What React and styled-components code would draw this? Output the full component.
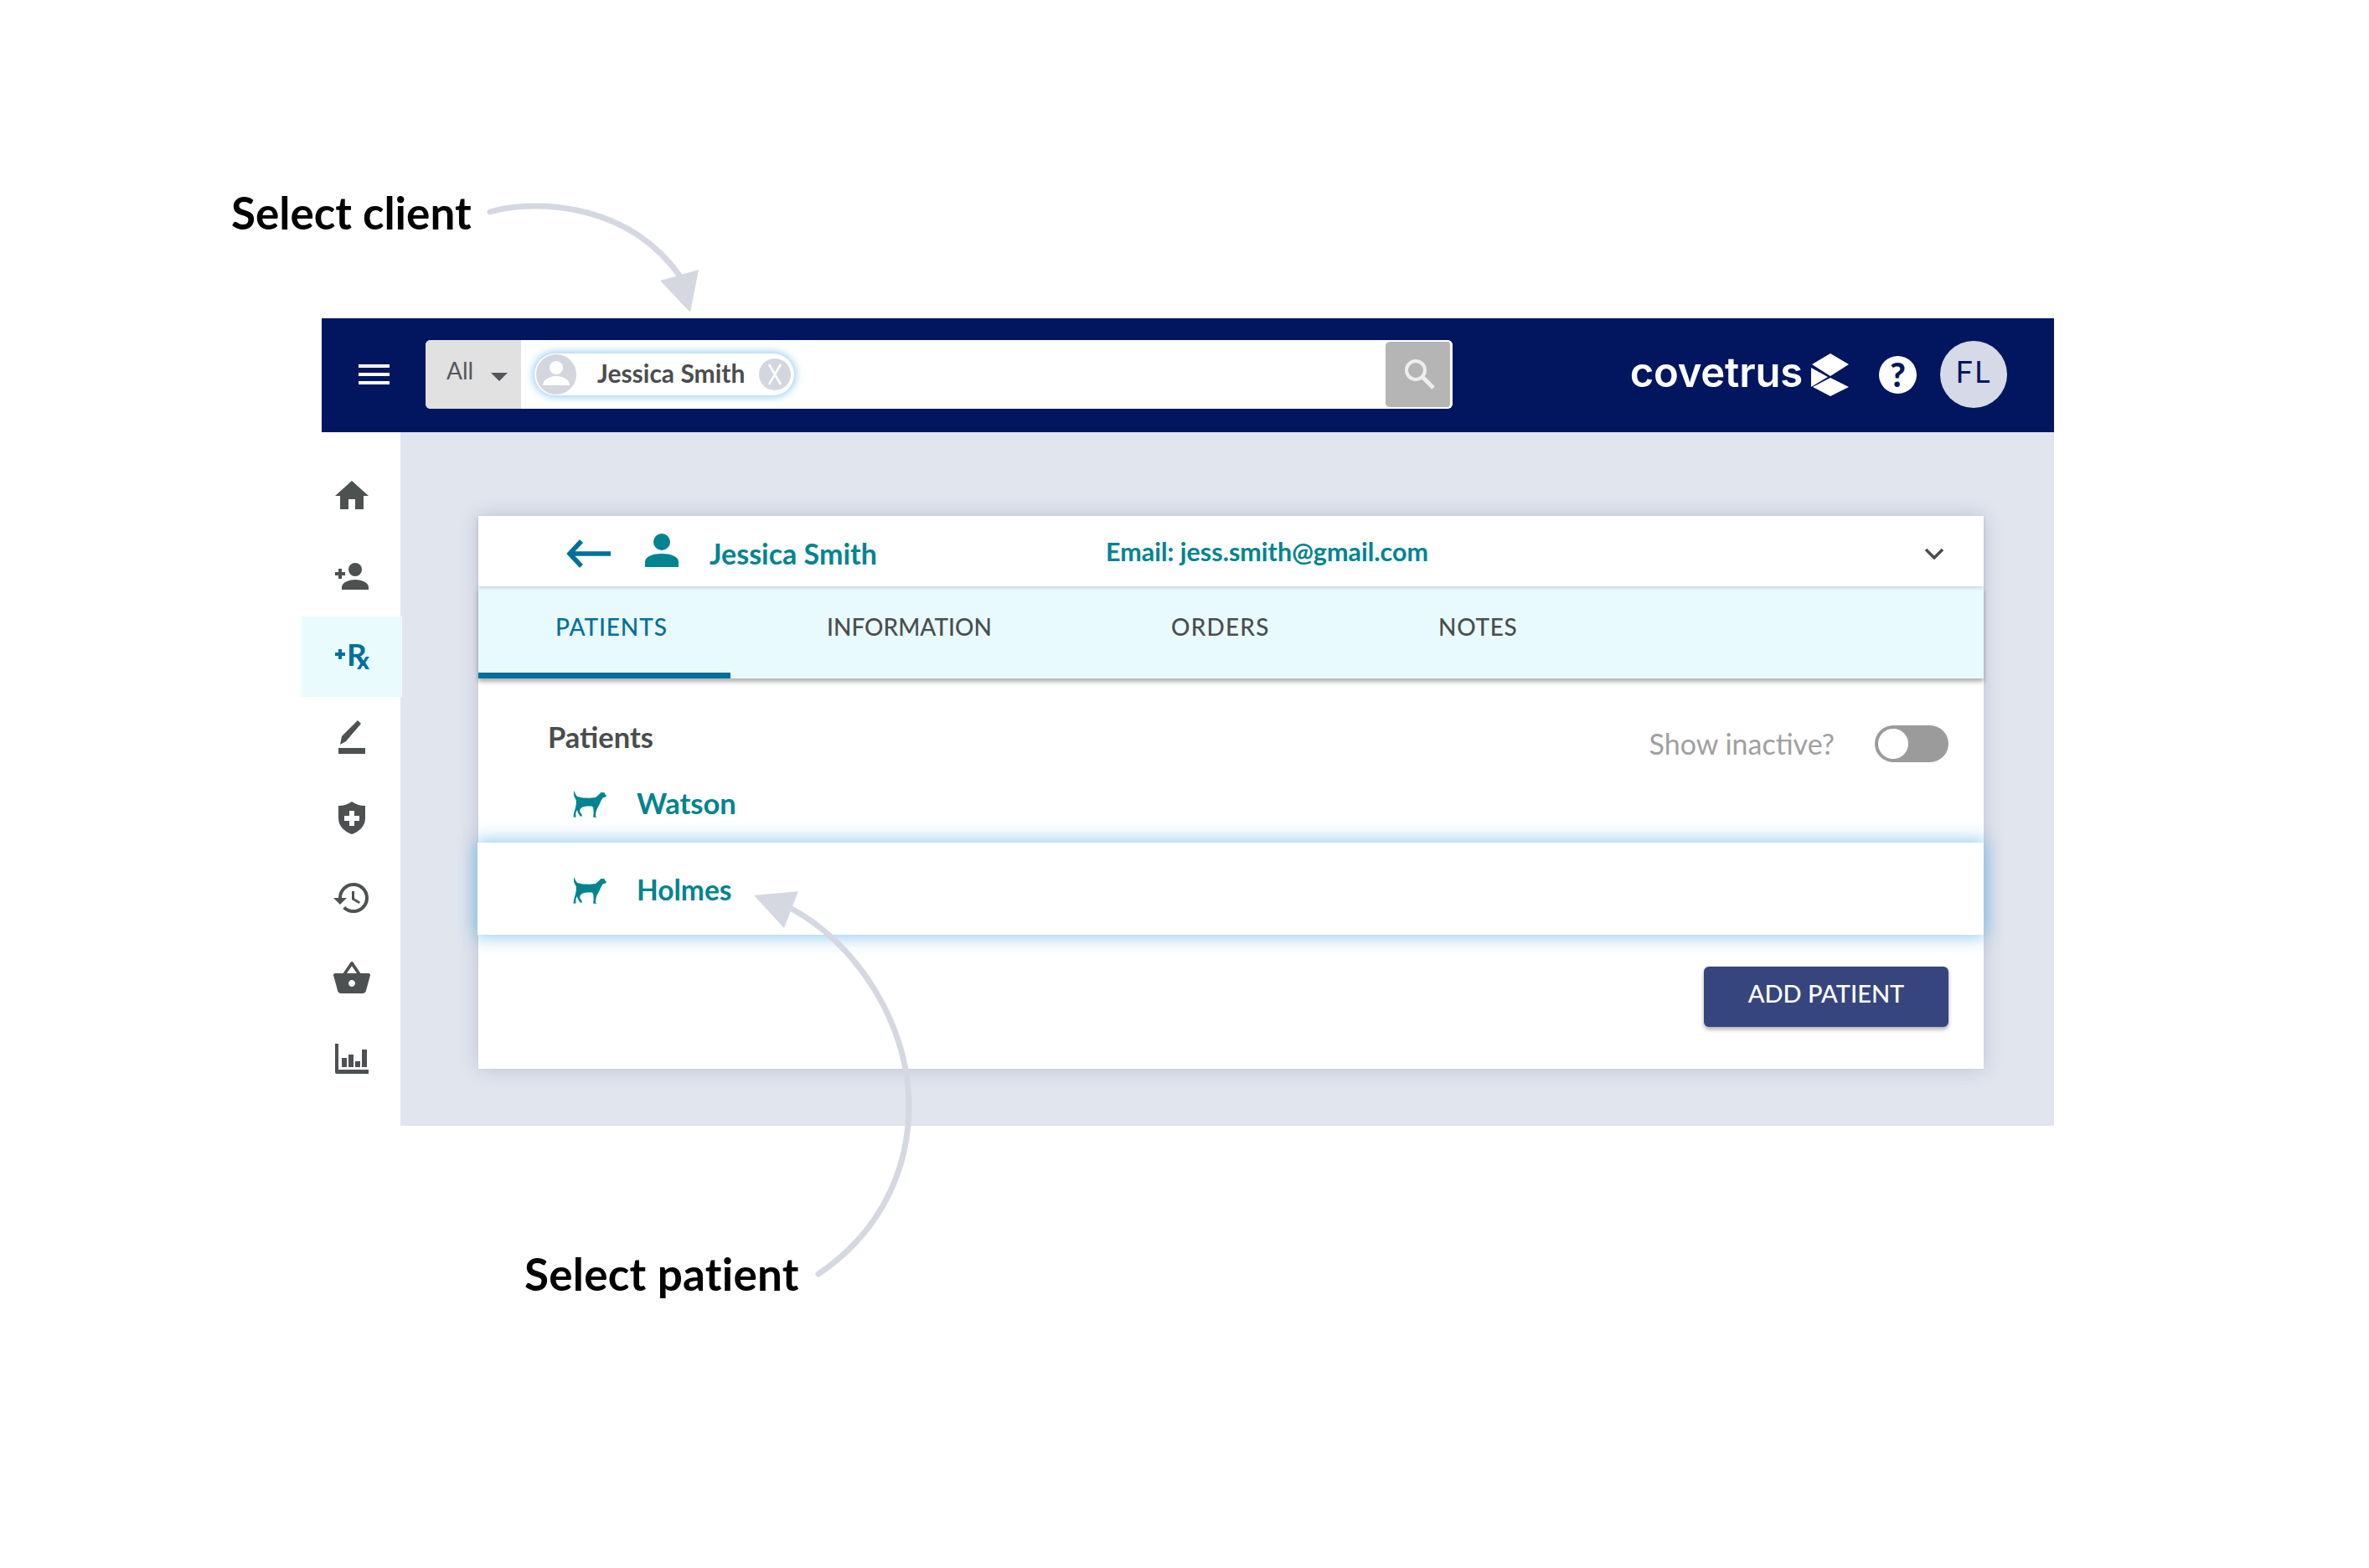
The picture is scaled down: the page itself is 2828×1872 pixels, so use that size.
import React from "react";
import styled, { createGlobalStyle } from "styled-components";

const Global = createGlobalStyle`
  html, body { margin: 0; padding: 0; background: #fff; }
  * { box-sizing: border-box; }
`;

const Page = styled.div`
  position: relative;
  width: 2828px;
  height: 1872px;
  overflow: hidden;
  background: #fff;
  font-family: "Lato", "Noto Sans", sans-serif;
`;
const Annotation = styled.div`
  font-size: 53px;
  font-weight: 700;
  line-height: 64px;
  color: #000;
  white-space: nowrap;
`;
const ClientNote = styled(Annotation)`
  height: 380px;
  padding: 222px 0 0 276px;
`;
const PatientNote = styled(Annotation)`
  padding: 145px 0 0 626px;
  letter-spacing: 0.25px;
`;
const ArrowLayer = styled.svg`
  position: absolute;
  left: 0;
  top: 0;
  z-index: 5;
  pointer-events: none;
`;
const AppFrame = styled.div`
  margin-left: 384px;
  width: 2068px;
`;
const Header = styled.header`
  display: flex;
  align-items: center;
  height: 136px;
  padding: 0 56px 2px 44px;
  background: #01165f;
`;
const Burger = styled.div`
  display: flex;
  flex-direction: column;
  justify-content: space-between;
  width: 37px;
  height: 24px;
  margin-right: 43px;
  span { display: block; height: 4px; background: #fff; }
`;
const SearchBar = styled.div`
  display: flex;
  width: 1226px;
  height: 82px;
  border-radius: 6px;
  overflow: hidden;
  background: #fff;
`;
const Scope = styled.div`
  display: flex;
  flex: none;
  width: 114px;
  padding: 19px 0 0 25px;
  background: #e1e1e1;
  color: #54575a;
  font-size: 28px;
  line-height: 34px;
`;
const Caret = styled.i`
  width: 0;
  height: 0;
  margin: 20px 0 0 21px;
  border-left: 10px solid transparent;
  border-right: 10px solid transparent;
  border-top: 10px solid #54575a;
`;
const SearchField = styled.div`
  flex: 1;
  display: flex;
  align-items: center;
  padding-left: 16px;
`;
const Chip = styled.div`
  display: flex;
  align-items: center;
  width: 310px;
  height: 50px;
  padding: 0 4px 0 2px;
  border-radius: 25px;
  background: #fff;
  box-shadow: 0 0 10px 2px rgba(120, 190, 232, 0.75);
  color: #4a4d4e;
  font-size: 30px;
  font-weight: 700;
`;
const ChipName = styled.span`
  flex: 1;
  padding: 0 0 5px 25px;
  white-space: nowrap;
`;
const SearchButton = styled.div`
  display: flex;
  align-items: center;
  justify-content: center;
  flex: none;
  width: 80px;
  padding: 0 0 0 4px;
  border: solid #fff;
  border-width: 2px 3px 2px 0;
  border-radius: 6px;
  background: #b5b5b5;
`;
const Brand = styled.div`
  display: flex;
  align-items: center;
  margin-left: auto;
`;
const BrandName = styled.span`
  color: #fff;
  font-family: "Inter", sans-serif;
  font-size: 49px;
  font-weight: 600;
  line-height: 46px;
  letter-spacing: -0.2px;
  margin: 0 10px 4px 0;
`;
const Help = styled.div`
  display: flex;
  align-items: center;
  justify-content: center;
  width: 45px;
  height: 45px;
  margin: 0 28px 0 36px;
  border-radius: 50%;
  background: #fff;
  color: #01165f;
  font-size: 40px;
  font-weight: 900;
  line-height: 1;
`;
const Avatar = styled.div`
  display: flex;
  align-items: center;
  justify-content: center;
  width: 80px;
  height: 80px;
  padding-bottom: 8px;
  border-radius: 50%;
  background: #d6d9e8;
  color: #01165f;
  font-size: 36px;
  letter-spacing: 2px;
`;
const Body = styled.div`
  display: flex;
`;
const Sidebar = styled.nav`
  flex: none;
  width: 94px;
  padding-top: 28px;
  background: #fff;
`;
const NavItem = styled.div`
  position: relative;
  z-index: 1;
  display: flex;
  align-items: center;
  justify-content: center;
  width: 120px;
  height: 96px;
  margin-left: -24px;
  background: ${(p) => (p.$active ? "#e9fbfc" : "transparent")};
  color: #4e5152;
`;
const RxMark = styled.span`
  position: relative;
  display: block;
  width: 40px;
  height: 30px;
  color: #00709b;
  line-height: 1;
  b {
    position: absolute;
    left: 0;
    top: 6px;
    width: 12px;
    height: 12px;
    background:
      linear-gradient(#00709b, #00709b) center / 12px 4px no-repeat,
      linear-gradient(#00709b, #00709b) center / 4px 12px no-repeat;
  }
  em { position: absolute; left: 14px; top: -7px; font-style: normal; font-size: 37px; font-weight: 700; }
  u { position: absolute; left: 26px; top: 5px; text-decoration: none; font-size: 28px; font-weight: 900; line-height: 1; }
`;
const Main = styled.main`
  flex: 1;
  padding: 100px 84px 68px 93px;
  background: #e1e5ee;
`;
const Card = styled.section`
  position: relative;
  display: flex;
  flex-direction: column;
  height: 660px;
  background: #fff;
  box-shadow: 0 0 22px rgba(60, 70, 110, 0.22);
`;
const CardHeader = styled.div`
  position: relative;
  z-index: 2;
  display: flex;
  align-items: center;
  flex: none;
  height: 84px;
  padding: 0 47px 0 105px;
  background: #fff;
  box-shadow: 0 2px 4px rgba(0, 0, 0, 0.14);
`;
const BackIcon = styled.svg`
  display: block;
  flex: none;
  margin-top: 5px;
  color: #00709b;
`;
const PersonIcon = styled.svg`
  display: block;
  flex: none;
  margin: 0 0 2px 41px;
  fill: #00848f;
`;
const Chevron = styled.svg`
  display: block;
  flex: none;
  margin-top: 5px;
  color: #4a4d4e;
`;
const ClientName = styled.span`
  margin-left: 37px;
  width: 473px;
  color: #00848f;
  font-size: 34px;
  font-weight: 700;
  padding-top: 4px;
`;
const Email = styled.span`
  flex: 1;
  color: #00848f;
  font-size: 30.500px;
  font-weight: 700;
`;
const Tabs = styled.div`
  position: relative;
  z-index: 1;
  display: flex;
  flex: none;
  height: 110px;
  background: #e9faff;
  box-shadow: 0 4px 5px rgba(0, 0, 0, 0.3);
`;
const Tab = styled.div`
  display: flex;
  align-items: center;
  width: ${(p) => p.$w}px;
  padding-left: ${(p) => p.$pl}px;
  padding-bottom: 8px;
  border-bottom: 7px solid ${(p) => (p.$active ? "#00709b" : "transparent")};
  color: ${(p) => (p.$active ? "#00709b" : "#4a4d4e")};
  font-size: 28px;
  font-weight: 500;
  letter-spacing: ${(p) => p.$ls || 0}px;
  white-space: nowrap;
`;
const PanelHead = styled.div`
  display: flex;
  justify-content: space-between;
  flex: none;
  height: 104px;
  padding: 50px 42px 0 83px;
`;
const PanelTitle = styled.h2`
  margin: 0;
  color: #4a4d4e;
  font-size: 34.500px;
  font-weight: 700;
  line-height: 40px;
`;
const InactiveToggle = styled.div`
  display: flex;
  align-items: flex-start;
  gap: 48px;
  color: #a0a0a0;
  font-size: 34px;
  font-weight: 400;
  line-height: 40px;
  padding-top: 8px;
`;
const ToggleTrack = styled.div`
  position: relative;
  width: 88px;
  height: 44px;
  margin-top: -2px;
  border-radius: 22px;
  background: #9b9b9b;
  &::after {
    content: "";
    position: absolute;
    left: 4px;
    top: 4px;
    width: 36px;
    height: 36px;
    border-radius: 50%;
    background: #fff;
  }
`;
const PatientRow = styled.div`
  position: relative;
  z-index: ${(p) => (p.$selected ? 3 : 0)};
  display: flex;
  align-items: center;
  flex: none;
  height: ${(p) => (p.$selected ? 110 : 92)}px;
  margin-left: ${(p) => (p.$selected ? -1 : 0)}px;
  padding: ${(p) => (p.$selected ? "4px 0 0 114px" : "0 0 0 113px")};
  background: #fff;
  box-shadow: ${(p) => (p.$selected ? "0 0 20px 2px rgba(100, 180, 230, 0.75)" : "none")};
  color: #00848f;
  font-size: ${(p) => (p.$selected ? 33.5 : 34.5)}px;
  font-weight: 700;
`;
const PatientName = styled.span`
  margin: 0 0 3px 36px;
`;
const CardFoot = styled.div`
  display: flex;
  justify-content: flex-end;
  padding: 38px 42px 0 0;
`;
const AddButton = styled.button`
  width: 292px;
  height: 72px;
  padding: 0 0 10px;
  border: none;
  border-radius: 6px;
  background: #37457f;
  box-shadow: 0 3px 5px rgba(0, 0, 0, 0.32);
  color: #fff;
  font-family: inherit;
  font-size: 29px;
  font-weight: 500;
`;

const Svg = styled.svg`
  display: block;
  flex: none;
  fill: currentColor;
`;
const DogIcon = styled(Svg)`
  color: #00848f;
`;
const LogoMark = styled(Svg)`
  color: #fff;
`;

const Dog = () => (
  <DogIcon width="40" height="32" viewBox="0 0 40 32">
    <path d="M1.700 0L2.600 3.500 5 7 12 8.500 20 8.800 27 8 31 4.500 33.500 2 37.500 2.300 38.500 4.500 40 5.800 39 7.500 35.500 8.500 33.500 12 31 17.500 28.500 22 27.300 26 27 30.500 28.500 31.700 24.200 31.700 24.600 26 24.300 21 23 18.500 16 18.500 11.500 19.500 8.500 22 8.200 25 10.500 28.500 11 30.500 8.500 30.500 5.800 26 5 23 3.500 26 3.200 29.500 3.800 31.500 .5 31.500 1 27 2.800 21 3.800 16 3.800 11.500 1.500 7 .8 3Z" />
  </DogIcon>
);

const Nav = [
  <Svg key="home" width="48" height="48" viewBox="0 0 24 24"><path d="M10 20v-6h4v6h5v-8h3L12 3 2 12h3v8z" /></Svg>,
  <Svg key="add" width="40" height="32" viewBox="0 0 40 32"><circle cx="24" cy="8" r="8" /><path d="M8 32v-3c0-6 10-9 16-9s16 3 16 9v3z" /><path d="M0 11h4V7h4v4h4v4H8v4H4v-4H0z" /></Svg>,
  <RxMark key="rx"><b /><em>R</em><u>x</u></RxMark>,
  <Svg key="edit" width="32" height="40" viewBox="0 0 32 40"><rect y="33" width="32" height="7" /><path d="M2 29l2-10L23 0l4 4L9 25z" /></Svg>,
  <Svg key="shield" width="32" height="39" viewBox="0 0 32 39"><path fillRule="evenodd" d="M16 0c4 3 10 5 16 5v15c0 10-8 16-16 19C8 36 0 30 0 20V5c6 0 12-2 16-5zM13 11v6H7v6h6v6h6v-6h6v-6h-6v-6z" /></Svg>,
  <Svg key="history" width="48" height="48" viewBox="0 0 24 24"><path d="M13 3a9 9 0 0 0-9 9H1l3.890 3.890.07.14L9 12H6c0-3.870 3.130-7 7-7s7 3.130 7 7-3.130 7-7 7c-1.930 0-3.680-.79-4.940-2.060l-1.420 1.420A8.954 8.954 0 0 0 13 21a9 9 0 0 0 0-18zm-1 5v5l4.280 2.540.72-1.210-3.500-2.080V8H12z" /></Svg>,
  <Svg key="basket" width="48" height="48" viewBox="0 0 24 24"><path d="M17.210 9l-4.380-6.560c-.19-.28-.51-.42-.83-.42-.32 0-.64.14-.83.43L6.790 9H2c-.55 0-1 .45-1 1 0 .09.01.18.04.27l2.540 9.270c.23.84 1 1.460 1.920 1.460h13c.92 0 1.690-.62 1.930-1.460l2.540-9.270L23 10c0-.55-.45-1-1-1h-4.790zM9 9l3-4.400L15 9H9zm3 8c-1.100 0-2-.9-2-2s.9-2 2-2 2 .9 2 2-.9 2-2 2z" /></Svg>,
  <Svg key="chart" width="40" height="36" viewBox="0 0 40 36"><path d="M0 0h4v31h36v5H2a2 2 0 0 1-2-2z" /><rect x="8" y="17" width="6" height="11" /><rect x="16" y="13" width="6" height="15" /><rect x="24" y="21" width="6" height="7" /><rect x="32" y="7" width="6" height="21" /></Svg>,
];

export default function App() {
  return (
    <Page>
      <Global />
      <ClientNote>Select client</ClientNote>
      <AppFrame>
        <Header>
          <Burger><span /><span /><span /></Burger>
          <SearchBar>
            <Scope>All<Caret /></Scope>
            <SearchField>
              <Chip>
                <Svg width="48" height="48" viewBox="0 0 48 48">
                  <circle cx="24" cy="24" r="24" fill="#d3d6df" />
                  <circle cx="24" cy="16" r="8" fill="#fff" />
                  <path d="M8 37c0-7 8-11 16-11s16 4 16 11z" fill="#fff" />
                </Svg>
                <ChipName>Jessica Smith</ChipName>
                <Svg width="38" height="38" viewBox="0 0 38 38">
                  <circle cx="19" cy="19" r="19" fill="#d3d6df" />
                  <path d="M12 7l14 24M26 7L12 31" stroke="#fff" strokeWidth="2.500" fill="none" />
                </Svg>
              </Chip>
            </SearchField>
            <SearchButton>
              <Svg width="40" height="40" viewBox="0 0 40 40">
                <circle cx="15" cy="15" r="11" fill="none" stroke="#eee" strokeWidth="4" />
                <path d="M23 23l13 13" stroke="#eee" strokeWidth="5" />
              </Svg>
            </SearchButton>
          </SearchBar>
          <Brand>
            <BrandName>covetrus</BrandName>
            <LogoMark width="45" height="51" viewBox="0 0 45 51">
              <path d="M23 0l22 13-22 14L1 13zM0 17l20 11L0 40zM23 29l22 11-22 11-21-11z" />
            </LogoMark>
            <Help>?</Help>
            <Avatar>FL</Avatar>
          </Brand>
        </Header>
        <Body>
          <Sidebar>
            {Nav.map((icon, i) => (
              <NavItem key={i} $active={i === 2}>{icon}</NavItem>
            ))}
          </Sidebar>
          <Main>
            <Card>
              <CardHeader>
                <BackIcon width="53" height="36" viewBox="0 0 53 36">
                  <path d="M53 18H4M18 3L4 18l14 15" fill="none" stroke="currentColor" strokeWidth="5.500" />
                </BackIcon>
                <PersonIcon width="40" height="40" viewBox="0 0 40 40">
                  <circle cx="20" cy="10" r="10" />
                  <path d="M0 40v-6c0-7 10-10 20-10s20 3 20 10v6z" />
                </PersonIcon>
                <ClientName>Jessica Smith</ClientName>
                <Email>Email: jess.smith@gmail.com</Email>
                <Chevron width="24" height="14" viewBox="0 0 24 14">
                  <path d="M2 2l10 10L22 2" fill="none" stroke="currentColor" strokeWidth="3.500" />
                </Chevron>
              </CardHeader>
              <Tabs>
                <Tab $active $w={301} $pl={92} $ls={0.9}>PATIENTS</Tab>
                <Tab $w={412} $pl={115}>INFORMATION</Tab>
                <Tab $w={320} $pl={114} $ls={1.2}>ORDERS</Tab>
                <Tab $w={300} $pl={113} $ls={0.7}>NOTES</Tab>
              </Tabs>
              <PanelHead>
                <PanelTitle>Patients</PanelTitle>
                <InactiveToggle>Show inactive?<ToggleTrack /></InactiveToggle>
              </PanelHead>
              <PatientRow><Dog /><PatientName>Watson</PatientName></PatientRow>
              <PatientRow $selected><Dog /><PatientName>Holmes</PatientName></PatientRow>
              <CardFoot><AddButton>ADD PATIENT</AddButton></CardFoot>
            </Card>
          </Main>
        </Body>
      </AppFrame>
      <PatientNote>Select patient</PatientNote>
      <ArrowLayer width="2828" height="1872" viewBox="0 0 2828 1872">
        <g fill="none" stroke="#d5d8e1" strokeWidth="7" strokeLinecap="round">
          <path d="M585 253C625 240 745 235 812 330" />
          <path d="M977 1521C1060 1465 1085 1385 1085 1320C1085 1220 1020 1125 945 1085" />
        </g>
        <g fill="#d5d8e1">
          <path d="M788 335L834 322L824 373Z" />
          <path d="M900 1069L953 1064L936 1108Z" />
        </g>
      </ArrowLayer>
    </Page>
  );
}
